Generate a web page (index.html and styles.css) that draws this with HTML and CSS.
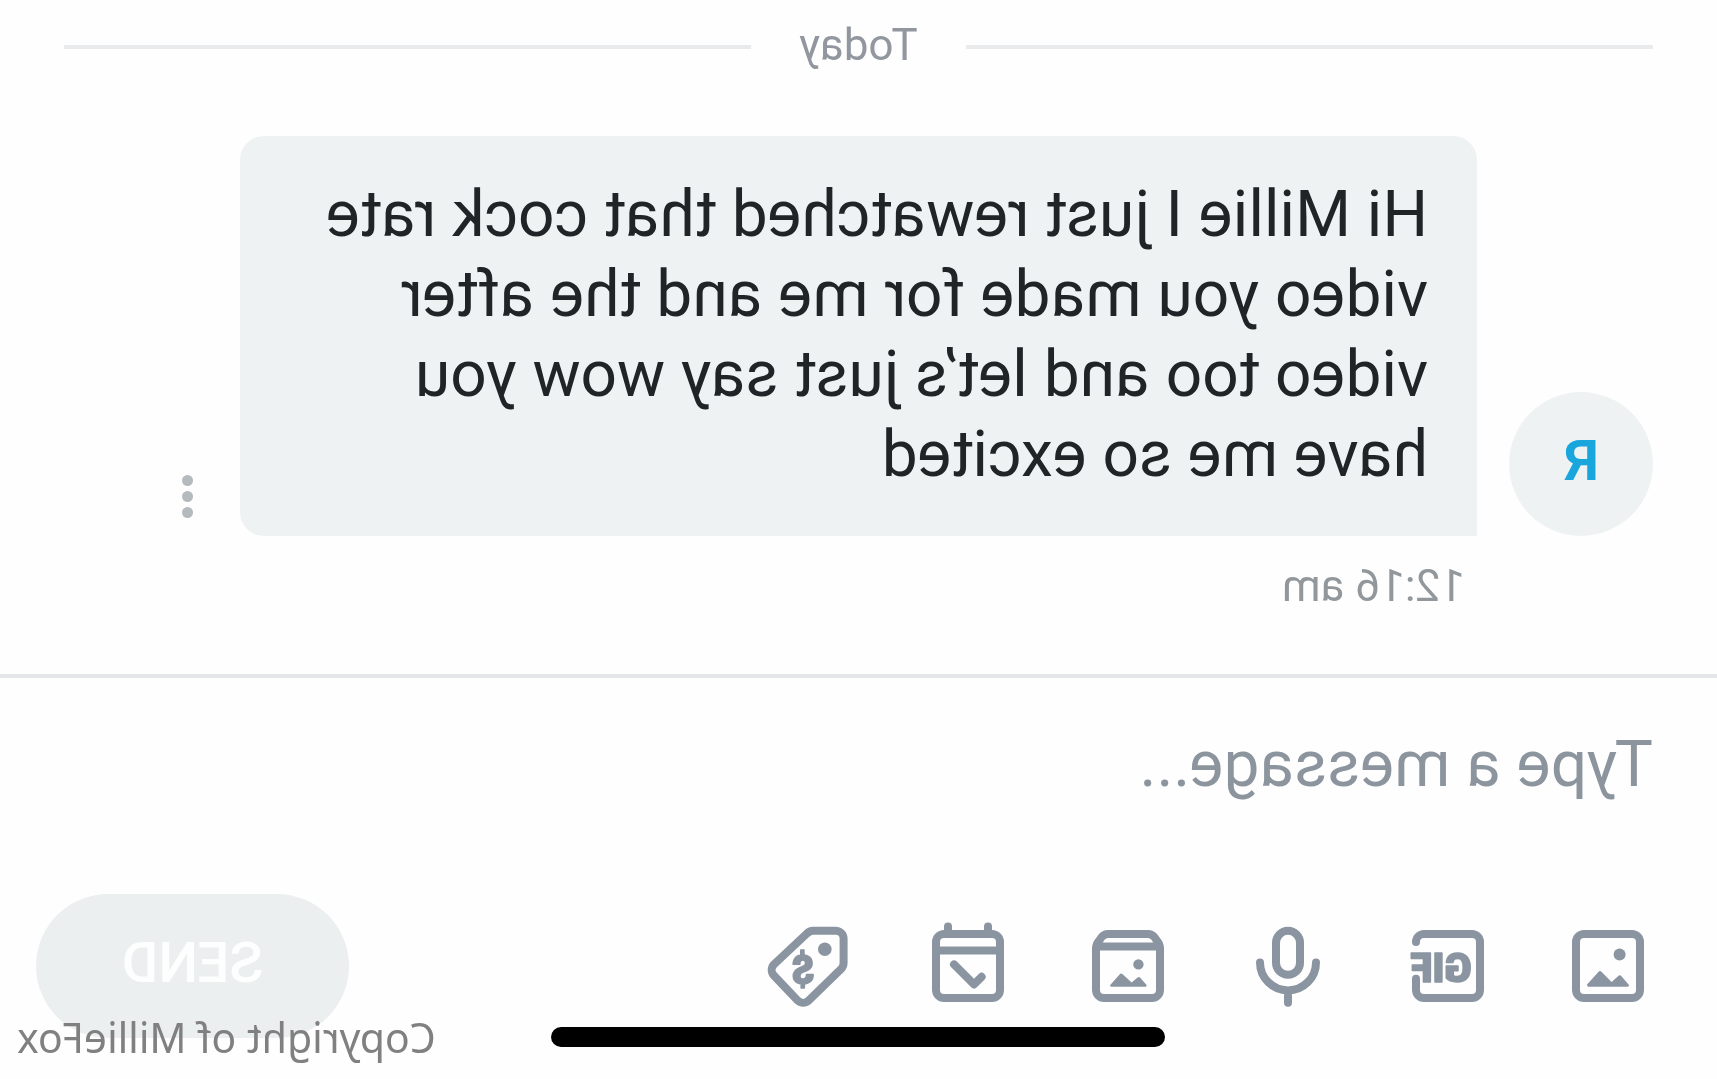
FILE: index.html
```html
<!DOCTYPE html>
<html lang="en">
<head>
<meta charset="utf-8">
<meta name="viewport" content="width=device-width, initial-scale=1">
<title>Messages</title>
<link rel="stylesheet" href="styles.css">
</head>
<body>
<div class="app">
  <main class="thread">
    <div class="day"><span class="day-label">Today</span></div>
    <article class="message">
      <div class="avatar">R</div>
      <p class="bubble">Hi Millie I just rewatched that cock rate video you made for me and the after video too and let’s just say wow you have me so excited</p>
      <button class="more" type="button" aria-label="Message options"><span class="dot"></span><span class="dot"></span><span class="dot"></span></button>
    </article>
    <time class="time" datetime="00:16">12:16 am</time>
  </main>
  <form class="composer">
    <input class="field" type="text" placeholder="Type a message..." aria-label="Message">
    <div class="toolbar">
      <div class="tools">
        <button class="tool" type="button" aria-label="Photo">
          <svg class="icon" viewBox="0 0 24 24"><rect x="4" y="4" width="16" height="16" rx="2"/><g class="solid"><circle cx="9.1" cy="9.1" r="1.5"/><path d="M7 17.2 6.7 16.8 8.8 14.4Q9 14.2 9.3 14.4L11.1 16 13.7 13.4Q14 13.1 14.3 13.4L17.3 16.7 17 17.2z"/></g></svg>
        </button>
        <button class="tool" type="button" aria-label="GIF">
          <svg class="icon" viewBox="0 0 24 24"><path d="M20 6a2 2 0 0 0-2-2H6a2 2 0 0 0-2 2v12a2 2 0 0 0 2 2h12a2 2 0 0 0 2-2v-2.8"/><text class="glyph" x="13.7" y="16" text-anchor="middle">GIF</text></svg>
        </button>
        <button class="tool" type="button" aria-label="Voice message">
          <svg class="icon" viewBox="0 0 24 24"><rect x="9" y="3.2" width="6" height="11" rx="3"/><path d="M5 11.1a7 7 0 0 0 14 0M12 18.2v3"/></svg>
        </button>
        <button class="tool" type="button" aria-label="Vault">
          <svg class="icon" viewBox="0 0 24 24"><path d="M4 18V7.7c0-.7.2-1.3.6-1.8l.8-1.1A2 2 0 0 1 7 4h10a2 2 0 0 1 1.6.8l.8 1.1c.4.5.6 1.1.6 1.8V18a2 2 0 0 1-2 2H6a2 2 0 0 1-2-2zM5 7.1h14"/><g class="solid"><circle cx="9.4" cy="11.6" r="1.3"/><path d="M7.5 17.2 7.3 16.8 9 14.9Q9.3 14.6 9.6 14.9L11.1 16.1 13.4 14Q13.7 13.7 14 14L16.5 16.8 16.3 17.2z"/></g></svg>
        </button>
        <button class="tool" type="button" aria-label="Schedule">
          <svg class="icon" viewBox="0 0 24 24"><rect x="4" y="4" width="16" height="16" rx="2"/><path d="M4 8.1h16M7 2.1V4M17 2.1V4M8.6 14.7l1.9 1.9 5-5"/></svg>
        </button>
        <button class="tool" type="button" aria-label="Price">
          <svg class="icon" viewBox="0 0 24 24"><path d="M5.1 3.2h5.6a2.4 2.4 0 0 1 1.6.7l8.2 7.7a2 2 0 0 1 0 2.8l-5.9 6.2a2 2 0 0 1-2.8 0l-8.1-7.9a2.4 2.4 0 0 1-.6-1.6V5.2a2 2 0 0 1 2-2z"/><circle class="solid" cx="7.8" cy="7.8" r="1.7"/><text class="glyph" x="13.2" y="16.6" text-anchor="middle">$</text></svg>
        </button>
      </div>
      <button class="send" type="submit" disabled>SEND</button>
    </div>
  </form>
  <div class="home-bar"></div>
  <div class="watermark">Copyright of MillieFox</div>
</div>
</body>
</html>
```
FILE: styles.css
```css
* {
  box-sizing: border-box;
}

body {
  margin: 0;
  background: #fefefe;
  font-family: Roboto, "Liberation Sans", sans-serif;
}

button {
  padding: 0;
  border: 0;
  background: none;
  font-family: inherit;
}

/* The whole conversation is shown flipped left to right. */
.app {
  position: relative;
  min-height: 100vh;
  overflow: hidden;
  transform: scaleX(-1);
}

.thread {
  padding: 16px 64px 62px;
}

.day {
  display: flex;
  align-items: center;
  gap: 48px;
  margin-bottom: 58px;
}

.day::before,
.day::after {
  content: "";
  flex: 1;
  height: 4px;
  background: #e9eaeb;
}

.day-label {
  padding-bottom: 4px;
  color: #92979f;
  font-size: 44px;
  line-height: 58px;
}

.message {
  display: flex;
  align-items: flex-end;
  padding-right: 112px;
}

.avatar {
  flex: none;
  width: 144px;
  height: 144px;
  margin-right: 32px;
  border-radius: 50%;
  background: #eff2f3;
  color: #18a6dd;
  font-size: 56px;
  font-weight: 700;
  line-height: 138px;
  text-align: center;
}

.bubble {
  flex: 1;
  margin: 0;
  padding: 39px 40px 41px 49px;
  border-radius: 24px 24px 24px 0;
  background: #eef2f3;
  color: #202426;
  font-size: 64px;
  line-height: 80px;
}

.more {
  display: flex;
  flex-direction: column;
  align-items: center;
  gap: 5px;
  width: 24px;
  margin: 0 0 18px 40px;
}

.dot {
  width: 11px;
  height: 11px;
  border-radius: 50%;
  background: #b5bbbc;
}

.time {
  display: block;
  margin: 24px 0 0 188px;
  color: #92979b;
  font-size: 44px;
  line-height: 52px;
}

.composer {
  padding: 46px 36px 38px 60px;
  border-top: 4px solid #e4e6ea;
}

.field {
  display: block;
  width: 100%;
  height: 80px;
  padding: 0 4px;
  border: 0;
  outline: 0;
  background: none;
  color: #202426;
  font-family: inherit;
  font-size: 64px;
}

.field::placeholder {
  color: #8c959e;
  opacity: 1;
}

.toolbar {
  display: flex;
  align-items: center;
  justify-content: space-between;
  margin-top: 90px;
}

.tools {
  display: flex;
  gap: 64px;
  padding-left: 1px;
}

.icon {
  display: block;
  width: 96px;
  height: 96px;
  fill: none;
  stroke: #8b95a1;
  stroke-width: 2;
  stroke-linecap: round;
  stroke-linejoin: round;
}

.solid {
  fill: #8b95a1;
  stroke: none;
}

.glyph {
  fill: #8b95a1;
  stroke-width: 0.4;
  font-size: 10px;
  font-weight: 900;
}

.send {
  width: 313px;
  height: 144px;
  padding-bottom: 7px;
  border-radius: 72px;
  background: #ebefef;
  color: #fdfefe;
  font-size: 56px;
  font-weight: 500;
}

.home-bar {
  position: absolute;
  bottom: 32px;
  left: 50%;
  width: 614px;
  height: 20px;
  margin-left: -307px;
  border-radius: 10px;
  background: #000;
}

.watermark {
  position: absolute;
  right: 17px;
  bottom: 14px;
  color: #808080;
  font-family: "Noto Sans", sans-serif;
  font-size: 41px;
  line-height: 56px;
}
```
